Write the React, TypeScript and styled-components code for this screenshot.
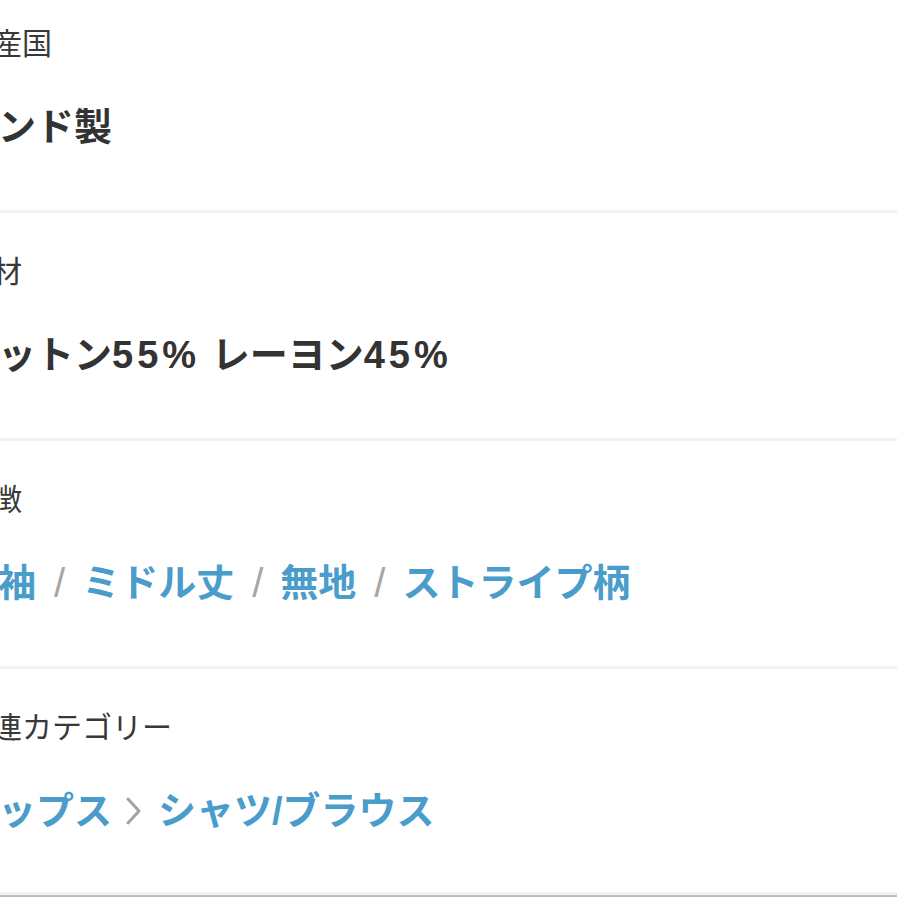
import styled, { createGlobalStyle } from "styled-components";

const GlobalStyle = createGlobalStyle`
  html, body {
    margin: 0;
    padding: 0;
    background: #fff;
    overflow: hidden;
  }
  body {
    font-family: "Liberation Sans", "Noto Sans CJK JP", sans-serif;
    color: #333;
  }
`;

type Spec = {
  label: string;
  kind: "text" | "tags" | "path";
  items: string[];
};

const SPECS: Spec[] = [
  { label: "原産国", kind: "text", items: ["インド製"] },
  { label: "素材", kind: "text", items: ["コットン55% レーヨン45%"] },
  {
    label: "特徴",
    kind: "tags",
    items: ["半袖", "ミドル丈", "無地", "ストライプ柄"],
  },
  {
    label: "関連カテゴリー",
    kind: "path",
    items: ["トップス", "シャツ/ブラウス"],
  },
];

const Chevron = () => (
  <ChevronIcon viewBox="0 0 20 28" width={20} height={28}>
    <path d="M4 2 L15 14 L4 26" fill="none" stroke="#a3a3a3" strokeWidth={3} strokeLinecap="round" strokeLinejoin="round" />
  </ChevronIcon>
);

// digits and % come out a touch wider in the original font
const withNumbers = (text: string) =>
  text.split(/([0-9%]+)/).map((part, i) =>
    /^[0-9%]+$/.test(part) ? <Num key={i}>{part}</Num> : part
  );

const SpecValue = ({ spec }: { spec: Spec }) => {
  if (spec.kind === "text") {
    return <Value>{withNumbers(spec.items[0])}</Value>;
  }
  return (
    <Value>
      {spec.items.map((item, i) => (
        <Piece key={item}>
          {i > 0 && (spec.kind === "tags" ? <Slash>/</Slash> : <Chevron />)}
          <Link>{item}</Link>
        </Piece>
      ))}
    </Value>
  );
};

export default function App() {
  return (
    <>
      <GlobalStyle />
      <Page>
        {SPECS.map((spec, i) => (
          <Section key={spec.label} $last={i === SPECS.length - 1}>
            <Label>{spec.label}</Label>
            <SpecValue spec={spec} />
          </Section>
        ))}
        <BottomRule />
      </Page>
    </>
  );
}

const Page = styled.div`
  margin: -15px 0 0 -40px;
  width: 937px;
`;

const Section = styled.section<{ $last?: boolean }>`
  padding: 39px 0 ${(p) => (p.$last ? 56 : 58)}px;
  border-bottom: 3px solid #f1f1f1;
  display: flex;
  flex-direction: column;
  gap: 38px;
`;

const Label = styled.div`
  font-size: 30px;
  line-height: 40px;
  color: #383838;
  white-space: nowrap;
  padding-left: 2px;
`;

const Value = styled.div`
  font-size: 38px;
  line-height: 50px;
  font-weight: 700;
  color: #333;
  white-space: pre;
  display: flex;
  align-items: center;
`;

const Num = styled.span`
  letter-spacing: 4px;
  margin-right: 1px;
`;

const Piece = styled.span`
  display: inline-flex;
  align-items: center;
`;

const Link = styled.span`
  color: #4a9ccb;
`;

const Slash = styled.span`
  color: #a6a6a6;
  font-weight: 400;
  font-size: 40px;
  margin: 0 17px 0 18px;
`;

const ChevronIcon = styled.svg`
  margin: 0 14px 0 12px;
`;

const BottomRule = styled.div`
  height: 3px;
  background: #bdbdbd;
`;
